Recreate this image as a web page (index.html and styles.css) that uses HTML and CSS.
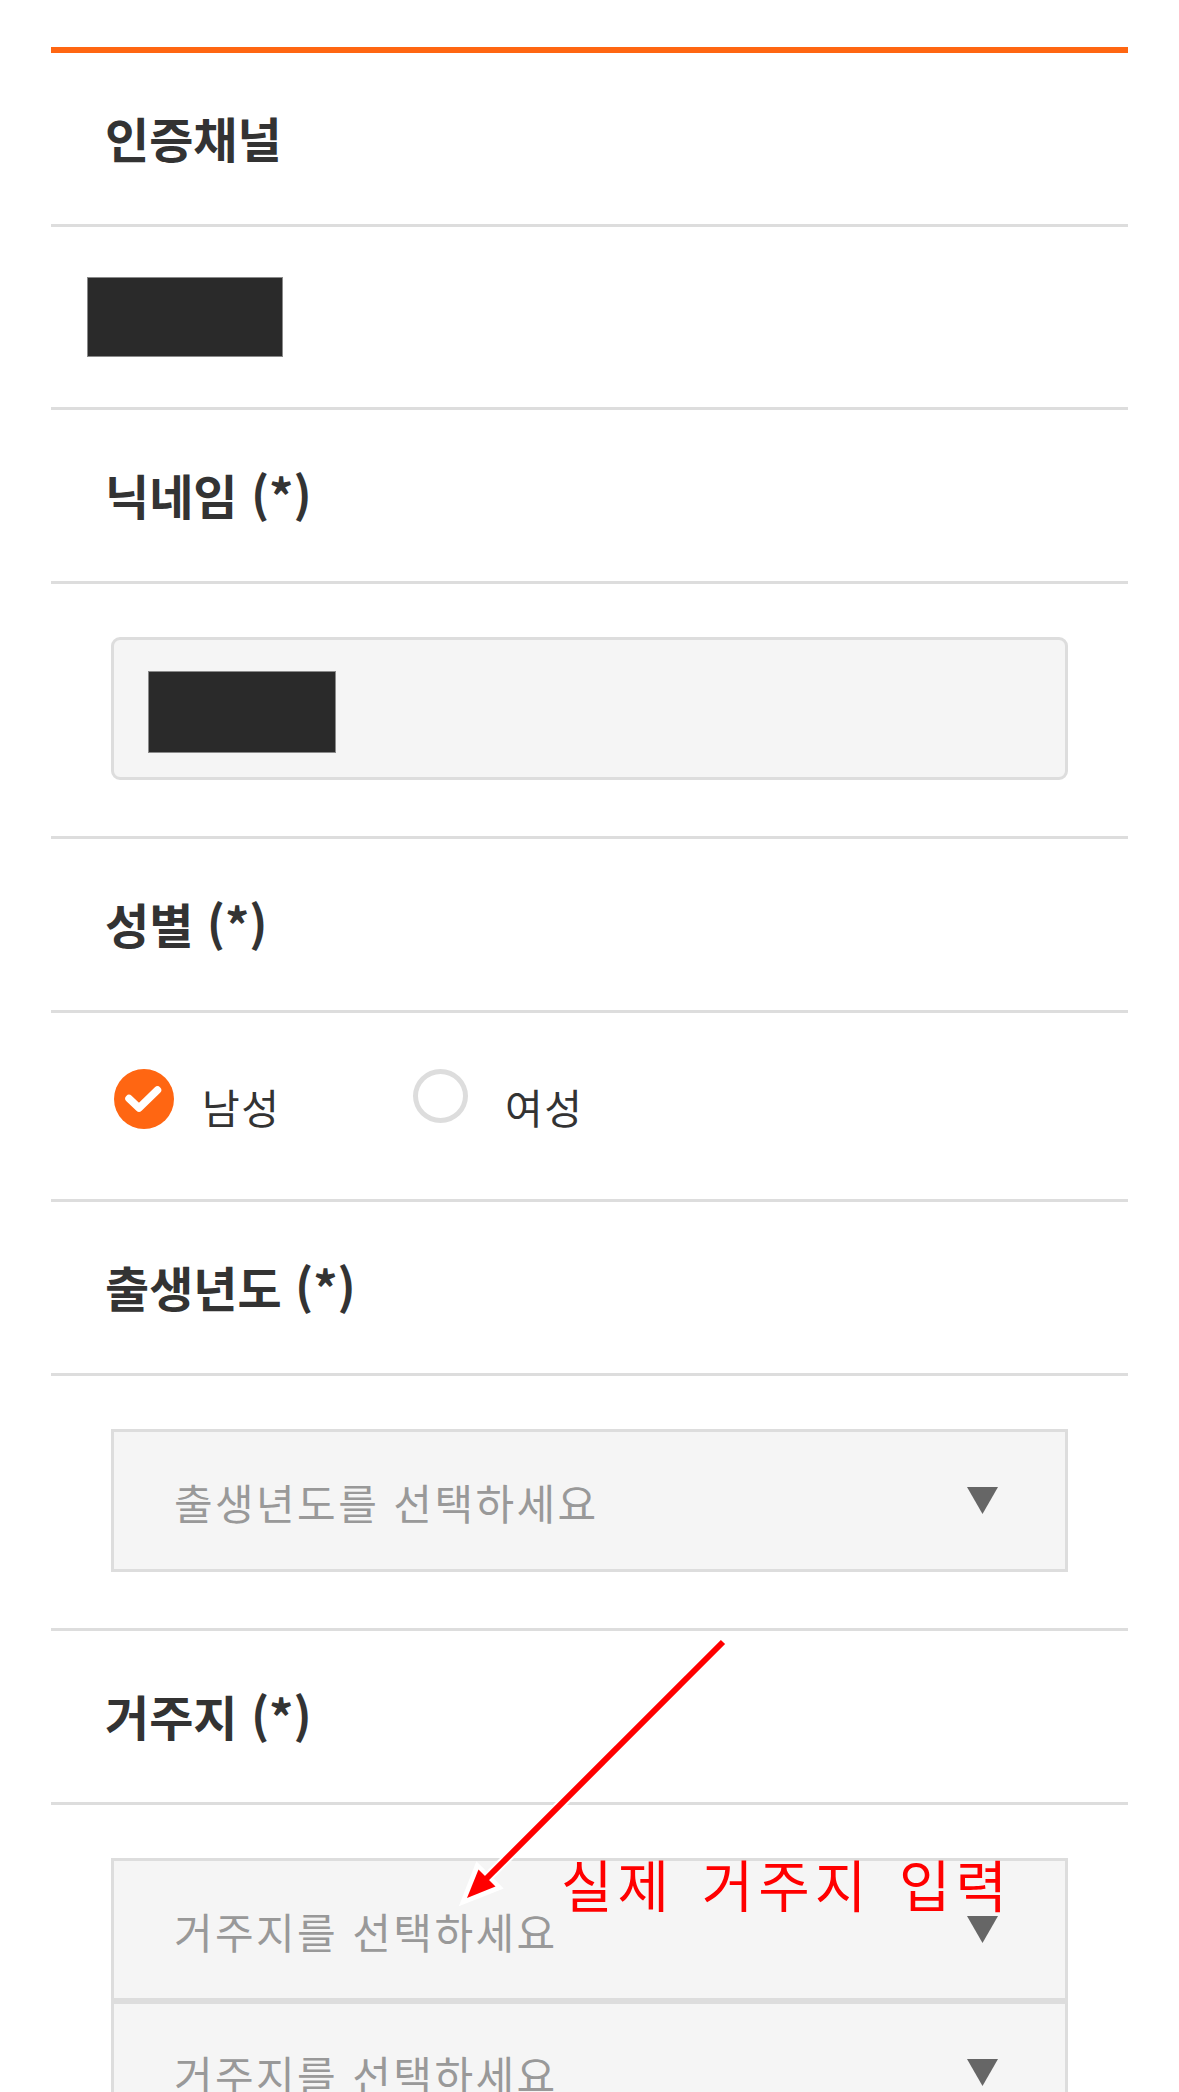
FILE: index.html
```html
<!DOCTYPE html>
<html lang="ko">
<head>
<meta charset="utf-8">
<title>회원정보</title>
<link rel="stylesheet" href="styles.css">
</head>
<body>
<div class="page">
  <div class="form">
    <div class="row head"><h2 class="title">인증채널</h2></div>
    <div class="row value"><span class="redact redact-channel"></span></div>

    <div class="row head"><h2 class="title">닉네임 (*)</h2></div>
    <div class="row field">
      <div class="input"><span class="redact redact-nick"></span></div>
    </div>

    <div class="row head"><h2 class="title">성별 (*)</h2></div>
    <div class="row radios">
      <label class="option option-male">
        <span class="radio radio-on">
          <svg viewBox="0 0 60 60" width="60" height="60" aria-hidden="true">
            <circle cx="30" cy="30" r="30" fill="#ff6612"/>
            <path d="M15 29.5 L25 39 L43.5 21" fill="none" stroke="#fff" stroke-width="7.5" stroke-linecap="round" stroke-linejoin="round"/>
          </svg>
        </span>
        <span class="option-text">남성</span>
      </label>
      <label class="option option-female">
        <span class="radio radio-off"></span>
        <span class="option-text">여성</span>
      </label>
    </div>

    <div class="row head"><h2 class="title">출생년도 (*)</h2></div>
    <div class="row field">
      <div class="select">
        <span class="placeholder">출생년도를 선택하세요</span>
        <svg class="caret" viewBox="0 0 31 27" width="31" height="27" aria-hidden="true"><polygon points="0,0 31,0 15.5,27" fill="#666"/></svg>
      </div>
    </div>

    <div class="row head"><h2 class="title">거주지 (*)</h2></div>
    <div class="row field field-last">
      <div class="select">
        <span class="placeholder">거주지를 선택하세요</span>
        <svg class="caret" viewBox="0 0 31 27" width="31" height="27" aria-hidden="true"><polygon points="0,0 31,0 15.5,27" fill="#666"/></svg>
      </div>
      <div class="select">
        <span class="placeholder">거주지를 선택하세요</span>
        <svg class="caret" viewBox="0 0 31 27" width="31" height="27" aria-hidden="true"><polygon points="0,0 31,0 15.5,27" fill="#666"/></svg>
      </div>
    </div>
  </div>

  <svg class="annot-arrow" viewBox="0 0 1179 2092" width="1179" height="2092" aria-hidden="true">
    <line x1="723" y1="1642" x2="486" y2="1879" stroke="#fff" stroke-width="10" stroke-linecap="round"/>
    <polygon points="465,1900 477.7,1867.5 497.5,1887.3" fill="#fff" stroke="#fff" stroke-width="7" stroke-linejoin="miter"/>
    <line x1="723" y1="1642" x2="486" y2="1879" stroke="#ff0000" stroke-width="6" stroke-linecap="butt"/>
    <polygon points="467,1898 478.5,1869.5 495.5,1886.5" fill="#ff0000"/>
  </svg>
  <div class="annot-text">실제 거주지 입력</div>
</div>
</body>
</html>
```

FILE: styles.css
```css
html, body {
  margin: 0;
  padding: 0;
  background: #ffffff;
}

body {
  font-family: "Noto Sans CJK KR", "Noto Sans", sans-serif;
  color: #333333;
}

.page {
  position: relative;
  width: 1179px;
  height: 2092px;
  overflow: hidden;
}

.form {
  margin: 47px 51px 0;
  border-top: 6px solid #ff6612;
}

.row {
  display: flex;
  align-items: center;
  border-bottom: 3px solid #dddddd;
}

.head {
  height: 171px;
  padding-left: 54px;
}

.title {
  margin: 0;
  font-size: 48px;
  font-weight: 700;
  color: #333333;
  margin-top: -3px;
}

.value {
  height: 180px;
  padding-left: 36px;
}

.redact {
  display: block;
  background: #2a2a2a;
  border: 1px solid #8a8a8a;
  box-sizing: border-box;
}

.redact-channel {
  width: 196px;
  height: 80px;
}

.redact-nick {
  width: 188px;
  height: 82px;
}

.field {
  flex-direction: column;
  align-items: stretch;
  padding: 53px 60px 56px;
}

.field-last {
  border-bottom: none;
  padding-bottom: 0;
}

.input {
  height: 143px;
  box-sizing: border-box;
  background: #f5f5f5;
  border: 3px solid #dddddd;
  border-radius: 9px;
  display: flex;
  align-items: center;
  padding: 6px 0 0 34px;
}

.radios {
  height: 189px;
  align-items: flex-start;
  padding-top: 56px;
  box-sizing: border-box;
  padding-left: 63px;
}

.option {
  display: flex;
  align-items: flex-start;
  font-size: 41px;
  letter-spacing: 1.5px;
  color: #333333;
}

.option-male {
  width: 299px;
}

.radio {
  display: block;
  flex: none;
}

.radio-on {
  width: 60px;
  height: 60px;
}

.radio-on svg {
  display: block;
}

.radio-off {
  width: 55px;
  height: 54px;
  box-sizing: border-box;
  border: 5px solid #dddddd;
  border-radius: 50%;
  margin-right: 37px;
}

.option-male .radio {
  margin-right: 28px;
}

.option-text {
  line-height: 60px;
  padding-top: 7px;
}

.select {
  height: 143px;
  box-sizing: border-box;
  background: #f5f5f5;
  border: 3px solid #dddddd;
  display: flex;
  align-items: center;
  justify-content: space-between;
  padding: 0 67px 0 60px;
}

.select + .select {
  border-top: 3px solid #dddddd;
}

.placeholder {
  font-size: 42px;
  letter-spacing: 2.4px;
  color: #999999;
  padding-top: 2px;
}

.caret {
  display: block;
  flex: none;
}

.annot-arrow {
  position: absolute;
  left: 0;
  top: 0;
  pointer-events: none;
}

.annot-text {
  position: absolute;
  left: 561px;
  top: 1855px;
  font-size: 56px;
  line-height: 1;
  color: #ff0000;
  letter-spacing: 5px;
  word-spacing: 7px;
  white-space: nowrap;
}
```
